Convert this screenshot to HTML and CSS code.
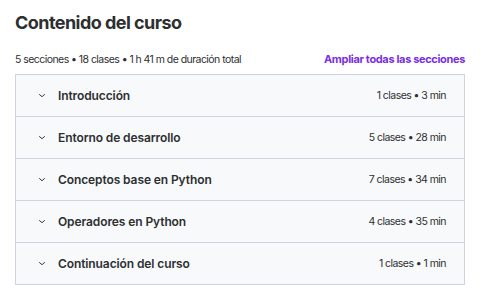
FILE: index.html
```html
<!DOCTYPE html>
<html lang="es">
<head>
    <meta charset="UTF-8">
    <title>Contenido del curso</title>
    <link rel="stylesheet" href="styles.css">
</head>
<body>
    <div class="course">
        <h2 class="title">Contenido del curso</h2>
        <div class="summary">
            <span class="stats">5 secciones • 18 clases • 1 h 41 m de duración total</span>
            <button class="expand">Ampliar todas las secciones</button>
        </div>
        <div class="sections">
            <div class="section">
                <svg class="chevron" viewBox="0 0 10 6"><path d="M1.5 1.5 L5 4.5 L8.5 1.5"/></svg>
                <span class="name">Introducción</span>
                <span class="meta">1 clases • 3 min</span>
            </div>
            <div class="section">
                <svg class="chevron" viewBox="0 0 10 6"><path d="M1.5 1.5 L5 4.5 L8.5 1.5"/></svg>
                <span class="name">Entorno de desarrollo</span>
                <span class="meta">5 clases • 28 min</span>
            </div>
            <div class="section">
                <svg class="chevron" viewBox="0 0 10 6"><path d="M1.5 1.5 L5 4.5 L8.5 1.5"/></svg>
                <span class="name">Conceptos base en Python</span>
                <span class="meta">7 clases • 34 min</span>
            </div>
            <div class="section">
                <svg class="chevron" viewBox="0 0 10 6"><path d="M1.5 1.5 L5 4.5 L8.5 1.5"/></svg>
                <span class="name">Operadores en Python</span>
                <span class="meta">4 clases • 35 min</span>
            </div>
            <div class="section">
                <svg class="chevron" viewBox="0 0 10 6"><path d="M1.5 1.5 L5 4.5 L8.5 1.5"/></svg>
                <span class="name">Continuación del curso</span>
                <span class="meta">1 clases • 1 min</span>
            </div>
        </div>
    </div>
</body>
</html>
```

FILE: styles.css
```css
body {
    margin: 0;
    background: #fff;
    font-family: Inter, "Liberation Sans", sans-serif;
    color: #2d2f31;
}

.course {
    width: 450px;
    padding: 10px 0 0 15px;
}

.title {
    margin: 0;
    font-size: 18px;
    font-weight: 700;
    line-height: 26px;
    letter-spacing: -0.55px;
}

.summary {
    display: flex;
    justify-content: space-between;
    align-items: center;
    margin-top: 13px;
    height: 20px;
    margin-bottom: 5px;
}

.stats {
    font-size: 10.5px;
    letter-spacing: -0.55px;
}

.expand {
    border: none;
    background: none;
    padding: 0;
    font-family: inherit;
    font-size: 11px;
    font-weight: 700;
    color: #7a2ee0;
    letter-spacing: -0.35px;
    cursor: pointer;
}

.sections {
    border: 1px solid #d1d2e0;
}

.section {
    display: flex;
    align-items: center;
    height: 41px;
    padding: 0 18px 0 22px;
    background: #f7f9fa;
    border-bottom: 1px solid #d1d2e0;
}

.section:last-child {
    border-bottom: none;
}

.chevron {
    width: 8px;
    height: 5px;
    fill: none;
    stroke: #2d2f31;
    stroke-width: 1.2;
    margin-right: 12px;
}

.name {
    flex: 1;
    font-size: 12px;
    font-weight: 600;
    letter-spacing: -0.1px;
}

.meta {
    font-size: 10.5px;
    letter-spacing: -0.55px;
}
```
